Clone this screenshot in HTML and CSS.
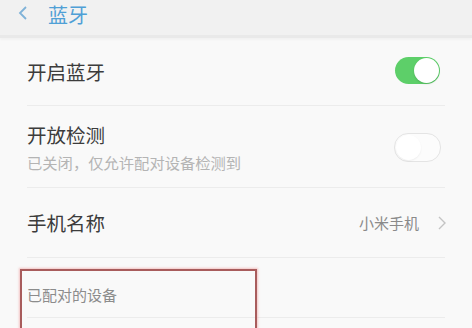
FILE: index.html
```html
<!DOCTYPE html>
<html lang="zh-CN">
<head>
    <meta charset="UTF-8">
    <meta name="viewport" content="width=device-width, initial-scale=1.0">
    <title>蓝牙</title>
    <link rel="stylesheet" href="styles.css">
</head>
<body>
    <header class="topbar">
        <svg class="back" width="12" height="16" viewBox="0 0 12 16">
            <polyline points="9,2 3,8 9,14" fill="none" stroke="#7fb2d8" stroke-width="1.8"/>
        </svg>
        <h1>蓝牙</h1>
    </header>

    <div class="list">
        <div class="row row-first">
            <div class="label">开启蓝牙</div>
            <div class="switch on"><span class="knob"></span></div>
        </div>
        <div class="row row-second">
            <div class="text">
                <div class="label">开放检测</div>
                <div class="hint">已关闭，仅允许配对设备检测到</div>
            </div>
            <div class="switch off"><span class="knob"></span></div>
        </div>
        <div class="row row-third">
            <div class="label">手机名称</div>
            <div class="value">
                小米手机
                <svg class="chevron" width="10" height="16" viewBox="0 0 10 16">
                    <polyline points="2,2 8,8 2,14" fill="none" stroke="#c4c4c4" stroke-width="1.4"/>
                </svg>
            </div>
        </div>
        <div class="section">
            <div class="section-title">已配对的设备</div>
        </div>
    </div>

    <div class="mark"></div>
</body>
</html>
```

FILE: styles.css
```css
body {
    margin: 0;
    width: 472px;
    height: 328px;
    overflow: hidden;
    position: relative;
    background-color: #f9f9f9;
    font-family: "Noto Sans CJK SC", "Noto Sans", sans-serif;
    color: #3c3c3c;
}

.topbar {
    height: 35px;
    background-color: #f1f1f1;
    display: flex;
    align-items: center;
    padding-left: 17px;
    border-bottom: 3px solid #e9e9e9;
    box-shadow: 0 2px 2px rgba(0,0,0,0.03);
}

.back {
    margin-top: -10px;
}

.topbar h1 {
    margin: -7px 0 0 19px;
    font-size: 20px;
    font-weight: normal;
    color: #4fa0d6;
}

.list {
    padding: 0 27px;
}

.row {
    display: flex;
    align-items: center;
    justify-content: space-between;
    border-bottom: 1px solid #ececec;
}

.row-first {
    height: 66px;
    padding-top: 1px;
}

.row-second {
    height: 81px;
}

.row-third {
    height: 69px;
}

.label {
    font-size: 19.5px;
    line-height: 24px;
}

.hint {
    font-size: 15.3px;
    color: #b4b4b4;
    margin-top: 6px;
    line-height: 18px;
}

.switch {
    position: relative;
    box-sizing: border-box;
    width: 45px;
    height: 27px;
    border-radius: 14px;
    margin-right: 5px;
}

.switch.on {
    background-color: #5dcf69;
    margin-top: -4px;
}

.switch.on .knob {
    position: absolute;
    right: 1px;
    top: 1px;
    width: 25px;
    height: 25px;
    border-radius: 50%;
    background-color: #fff;
    box-shadow: 0 1px 2px rgba(0,0,0,0.15);
}

.switch.off {
    width: 47px;
    height: 29px;
    background-color: #fcfcfc;
    border: 1px solid #e4e4e4;
    margin-top: 2px;
    margin-right: 4px;
}

.switch.off .knob {
    position: absolute;
    left: 1px;
    top: 1px;
    width: 25px;
    height: 25px;
    border-radius: 50%;
    background-color: #fff;
    box-shadow: 0 1px 2px rgba(0,0,0,0.06);
}

.value {
    display: flex;
    align-items: center;
    gap: 18px;
    font-size: 15px;
    color: #8a8a8a;
    margin-right: -2px;
}

.section {
    height: 60px;
    display: flex;
    align-items: flex-end;
    padding-bottom: 12px;
    box-sizing: border-box;
    border-bottom: 1px solid #ececec;
}

.section-title {
    font-size: 15px;
    color: #8c8c8c;
}

/* annotation box, runs off the bottom edge */
.mark {
    position: absolute;
    left: 20px;
    top: 269px;
    width: 233px;
    height: 57px;
    border: 2px solid #a85c5c;
    border-bottom: none;
    box-shadow: 0 0 2px 1px rgba(240,160,160,0.6);
}
```
